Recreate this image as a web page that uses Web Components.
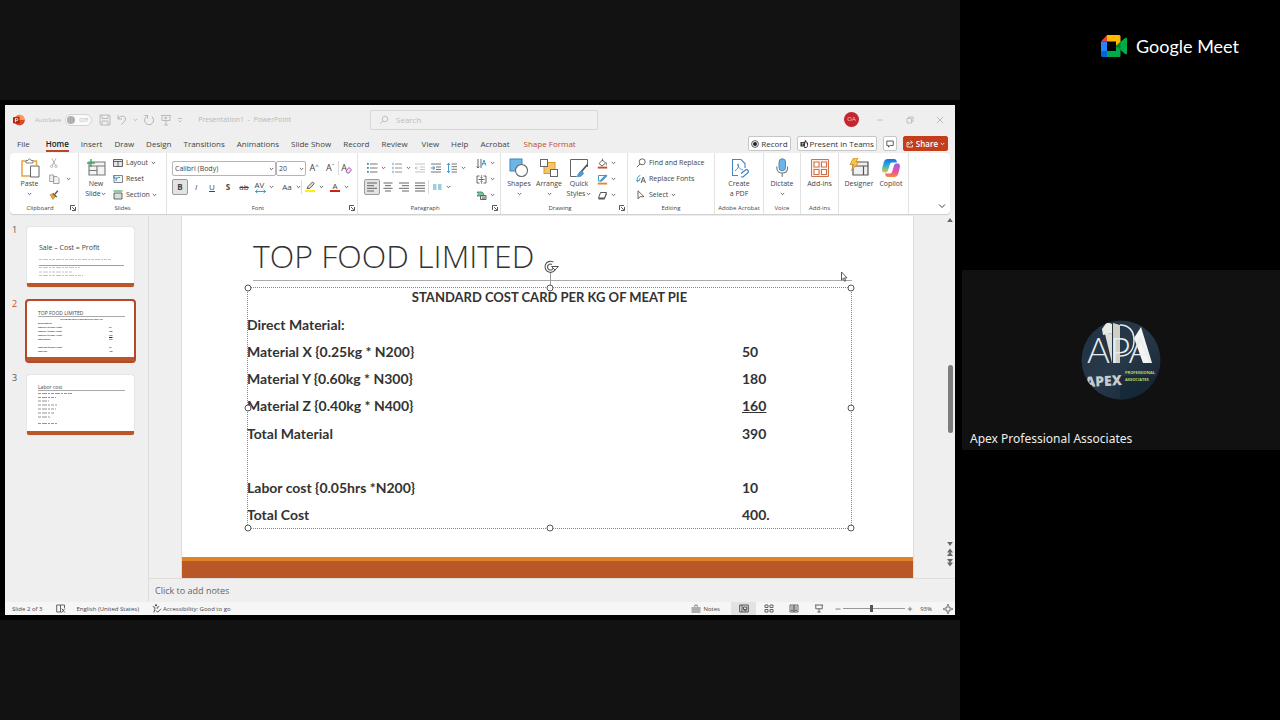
<!DOCTYPE html>
<html lang="en">
<head>
<meta charset="utf-8">
<title>Google Meet – Presentation1</title>
<style>
html,body{margin:0;min-height:100%;background:#111}
body{font-family:"Open Sans","Noto Sans",sans-serif}
</style>
</head>
<body>
<meet-room></meet-room>
<script>
const ICONS={
 chev:[5,4,`<path d="M.8 1l1.7 1.7L4.2 1" fill="none" stroke="#555" stroke-width=".9"/>`],
 chevw:[5,4,`<path d="M.8 1l1.7 1.7L4.2 1" fill="none" stroke="#fff" stroke-width=".9"/>`],
 collapse:[8,6,`<path d="M1 1.5l3 3 3-3" fill="none" stroke="#444"/>`],
 launch:[6,6,`<path d="M.5 5V.5H5M2.2 2.2l2.6 2.6M5.5 2v3.5H2" fill="none" stroke="#444" stroke-width=".9"/>`],
 ppt:[12,12,`<circle cx="6.5" cy="6" r="5.2" fill="#ed6c47"/><path d="M6.5.8a5.2 5.2 0 0 1 5.2 5.2H6.5z" fill="#ff9a4f"/><path d="M1.3 6h10.4a5.2 5.2 0 0 1-10.4 0z" fill="#d9482b"/><rect y="3" width="6.5" height="6.5" rx="1" fill="#b51f08"/><path d="M2.4 8.2V4.4h1.3a1.1 1.1 0 0 1 0 2.3H2.4" fill="none" stroke="#fff" stroke-width=".9"/>`],
 save:[12,12,`<path d="M1 1h9l1 1v9H2l-1-1zM3 1v3.5h6V1M3 11V7h6v4" fill="none" stroke="#b4b4b4" stroke-width=".9"/>`],
 undo:[12,12,`<path d="M2 1v4h4M2.2 4.8C4.5 1 9.5 1.500 9.500 4.800c0 2-1.500 3.200-4 5.700" fill="none" stroke="#b4b4b4"/>`],
 redo:[12,12,`<path d="M3.500 2.500a4.500 4.500 0 1 0 5.500.3M1.500 1.500h3v3" fill="none" stroke="#b4b4b4"/>`],
 show:[12,12,`<path d="M1 1.500h10M2 1.500v5h8v-5M6 6.500V11M4 11h4M5 3v2l2-1z" fill="none" stroke="#b4b4b4" stroke-width=".9"/>`],
 more:[6,6,`<path d="M1 1.500h4M1.500 3.500L3 5l1.500-1.500" fill="none" stroke="#b4b4b4" stroke-width=".8"/>`],
 gchev:[5,4,`<path d="M.8 1l1.700 1.700L4.200 1" fill="none" stroke="#b4b4b4" stroke-width=".9"/>`],
 search:[10,10,`<circle cx="6" cy="4" r="2.800" fill="none" stroke="#bbb" stroke-width=".9"/><path d="M4 6L1.200 8.800" stroke="#bbb" stroke-width=".9"/>`],
 min:[8,8,`<path d="M1 4h6" stroke="#c4c4c4"/>`],
 restore:[8,8,`<path d="M1 2.500h4.500V7H1zM2.500 2.500V1H7v4.500H5.500" fill="none" stroke="#bbb" stroke-width=".9"/>`],
 close:[8,8,`<path d="M1 1l6 6M7 1L1 7" stroke="#b4b4b4" stroke-width=".9"/>`],
 rec:[8,8,`<circle cx="4" cy="4" r="3.400" fill="none" stroke="#333" stroke-width=".8"/><circle cx="4" cy="4" r="2" fill="#222"/>`],
 teams:[8,8,`<rect x=".5" y="2" width="4.500" height="4.500" fill="#333"/><path d="M5.500 2.800h2V5.500a2 2 0 0 1-3.500 1.400" fill="none" stroke="#333"/><circle cx="5.500" cy="1.300" r="1" fill="#333"/><path d="M1.700 3.300h2M2.700 3.300v2.400" stroke="#fff" stroke-width=".6"/>`],
 comment:[8,8,`<path d="M.8 1h6.400v4.500H4.200L2.500 7V5.500H.8z" fill="none" stroke="#333" stroke-width=".8"/>`],
 share:[8,8,`<path d="M3 2.500H1V7h5.500V5M2.500 5c.3-2 1.500-2.700 3-2.700M4.600.8l1.900 1.600-1.900 1.600" fill="none" stroke="#fff" stroke-width=".8"/>`],
 paste:[20,20,`<path d="M6 3H2v15h8M13 3h3.500v4" fill="none" stroke="#e8a33d" stroke-width="1.500"/><path d="M6 5V2.500h2a1.500 1.500 0 0 1 3 0h2V5z" fill="#fff" stroke="#777" stroke-width=".9"/><path d="M10.500 8H19v11h-8.500z" fill="#fff" stroke="#666"/>`],
 cut:[10,10,`<path d="M2.800.5l3.700 6.800M7 .5L3.300 7.300" stroke="#aaa" stroke-width=".9"/><circle cx="2.700" cy="8.300" r="1.200" fill="none" stroke="#aaa" stroke-width=".8"/><circle cx="7.100" cy="8.300" r="1.200" fill="none" stroke="#aaa" stroke-width=".8"/>`],
 copy:[11,10,`<path d="M.7 1h4v6.500h-4zM4.500 2.500h3.500l2 2V9.500H4.500z" fill="#f2f2f2" stroke="#999" stroke-width=".9"/>`],
 painter:[10,10,`<path d="M6 4l2.800-3.200" stroke="#555" stroke-width="1.400"/><path d="M1 4.800l4-1.300 2 2.500-3 3.500z" fill="#e8a33d" stroke="#c07b1a" stroke-width=".6"/><path d="M3.800 3.400l4 3.600" stroke="#555" stroke-width="1.200"/>`],
 newslide:[20,20,`<path d="M3 4h16v13H3zM3 8h16M11 8v9M3 12.500h8" fill="#f4f4f4" stroke="#777" stroke-width="1.100"/><path d="M5 1v8M1 5h8" stroke="#41a567" stroke-width="1.400"/>`],
 layout:[10,10,`<path d="M.5 1.500h9v7h-9zM.5 3.500h9M5 3.500v5" fill="#e6e6e6" stroke="#555" stroke-width=".9"/>`],
 reset:[10,10,`<path d="M1 1.500h8.500v7H1z" fill="#f1f6f9" stroke="#777" stroke-width=".9"/><path d="M3 7c0-3 2-4 4-3.500M.8 1v3h3" fill="none" stroke="#2f8fc4"/>`],
 section:[10,10,`<path d="M.5 1h9" stroke="#41a567" stroke-width="1.200"/><path d="M1 3h8v6H1z" fill="#cfe5d6" stroke="#555" stroke-width=".9"/>`],
 av:[13,13,`<path d="M1.500 10.500h10M3.500 8.800L1.500 10.500l2 1.700M9.500 8.800l2 1.700-2 1.700" fill="none" stroke="#2f8fc4" stroke-width=".9"/>`],
 clear:[8,8,`<path d="M1 5l2.800-3.500L6.500 3.700 4 7H2.200z" fill="#f3def3" stroke="#a349a4" stroke-width=".9"/>`],
 hl:[12,12,`<path d="M3 7.500l1-2L8.500 1l1.800 1.500L6 7.300z" fill="#ddd" stroke="#555" stroke-width=".9"/><path d="M1 10h10" stroke="#fff100" stroke-width="2.200"/>`],
 bul:[12,12,`<path d="M4 2h7.500M4 6h7.500M4 10h7.500" stroke="#666" stroke-width=".9"/><path d="M1 1h1.800v1.800H1zM1 5h1.800v1.800H1zM1 9h1.800v1.800H1z" fill="#2f8fc4"/>`],
 num:[12,12,`<path d="M4 2h7M4 6h7M4 10h7" stroke="#888" stroke-width=".9"/><path d="M2 .8v2.400M2 4.800v2.400M2 8.800v2.400" stroke="#2f8fc4" stroke-width=".9"/>`],
 dec:[12,12,`<path d="M1 2h10M6 5h5M6 7.500h5M1 10h10M4.500 6H1M2.500 4.500L1 6l1.500 1.500" fill="none" stroke="#bbb" stroke-width=".9"/>`],
 inc:[12,12,`<path d="M1 2h10M6 5h5M6 7.500h5M1 10h10" stroke="#666" stroke-width=".9"/><path d="M.8 6h4M3 4.200L4.800 6 3 7.800" fill="none" stroke="#2f8fc4"/>`],
 spc:[12,12,`<path d="M5.500 2H11M5.500 4.700H11M5.500 7.300H11M5.500 10H11" stroke="#666" stroke-width=".9"/><path d="M2.500 1.500v9M1 3l1.500-1.700L4 3M1 9l1.500 1.700L4 9" fill="none" stroke="#2f8fc4" stroke-width=".9"/>`],
 al:[12,12,`<path d="M1 2h10M1 4.700h7M1 7.300h10M1 10h7" stroke="#555" stroke-width=".9"/>`],
 ac:[12,12,`<path d="M1.500 2h9M3 4.700h6M1.500 7.300h9M3 10h6" stroke="#555" stroke-width=".9"/>`],
 ar:[12,12,`<path d="M1 2h10M4 4.700h7M1 7.300h10M4 10h7" stroke="#555" stroke-width=".9"/>`],
 aj:[12,12,`<path d="M1 2h10M1 4.700h10M1 7.300h10M1 10h10" stroke="#555" stroke-width=".9"/>`],
 cols:[10,10,`<path d="M1 3h3.500M1 5h3.500M1 7h3.500M6 3h3.500M6 5h3.500M6 7h3.500" stroke="#3aa0b8" stroke-width="1.200"/>`],
 tdir:[11,11,`<path d="M2 1v9M.7 8.500L2 10l1.300-1.500M5 1v9" fill="none" stroke="#555" stroke-width=".9"/><path d="M6 7.500L8 2l2 5.500M6.700 5.700h2.600" fill="none" stroke="#2f8fc4" stroke-width=".9"/>`],
 tal:[11,11,`<path d="M3.500 2H1v7h2.500M7.500 2H10v7H7.500M2.500 5.500h6" fill="none" stroke="#555" stroke-width=".9"/><path d="M5.500 1v3.500M5.500 6.500V10M4.300 3.300l1.200 1.200 1.200-1.200M4.300 7.700l1.200-1.200 1.200 1.200" fill="none" stroke="#2f8fc4" stroke-width=".8"/>`],
 smart:[11,11,`<path d="M1 2h5l2 2-2 2H1l1.500-2z" fill="#7cc29a" stroke="#2e8555" stroke-width=".8"/><path d="M4.500 5.500h5.500v4H4.500z" fill="#ddd" stroke="#555" stroke-width=".9"/><path d="M6 7h3M6 8.300h3" stroke="#555" stroke-width=".6"/>`],
 shapes:[20,20,`<rect x="1" y="1" width="12" height="12" fill="#6fb4e6" stroke="#3b86c0"/><circle cx="12.500" cy="12.500" r="6" fill="#fff" stroke="#666" stroke-width="1.100"/>`],
 arrange:[20,20,`<rect x="5" y="4.500" width="11" height="11" fill="#f3c66d" stroke="#d99a2b"/><rect x="1.500" y="1.500" width="7" height="7" fill="#fff" stroke="#666"/><rect x="11.500" y="11.500" width="7" height="7" fill="#fff" stroke="#666"/>`],
 quick:[20,20,`<path d="M18.500 9V1.500h-17v17h6" fill="none" stroke="#666"/><path d="M18.500 6.500L12 14" stroke="#555" stroke-width="1.800"/><path d="M12.500 13l2 2c-1 3.500-4 4-7 3.500 2-.8 1.500-4.500 5-5.500z" fill="#4a9bd9" stroke="#2b78b5" stroke-width=".6"/>`],
 fill:[11,11,`<path d="M2 5.500L5.500 2l3 3-3.500 3z" fill="#fff" stroke="#555" stroke-width=".9"/><path d="M5.500 3V.6M9.300 4.500v3" stroke="#555" stroke-width=".8"/><path d="M.8 9.600h9.400" stroke="#c4502a" stroke-width="1.900"/>`],
 outl:[11,11,`<path d="M1.500 1.500h7M1.500 1.500v5.500h3" fill="none" stroke="#2f8fc4" stroke-width=".9"/><path d="M3.500 7.200l1-2.200L9 .8l1 1L5.700 6.500z" fill="#4a9bd9" stroke="#2b78b5" stroke-width=".6"/><path d="M.8 9.600h9.400" stroke="#e08a2a" stroke-width="1.900"/>`],
 fx:[11,11,`<path d="M3.500 2.500h6L7.500 8h-6z" fill="#fff" stroke="#444" stroke-width=".9"/><path d="M1.500 8v1.500h6L10 4V2.500L7.500 8z" fill="#555"/>`],
 find:[10,10,`<circle cx="6.200" cy="3.800" r="3" fill="none" stroke="#555" stroke-width=".9"/><path d="M4 6L.8 9.200" stroke="#555" stroke-width=".9"/>`],
 rfont:[10,10,`<path d="M5 9l2.200-6L9.500 9M5.800 7h2.800" fill="none" stroke="#555" stroke-width=".9"/><path d="M4.300 1.500C1.500 2 .8 4.500 1.500 7.500M.3 6l1.300 1.700L3 6.300M3 7l1.300-3" fill="none" stroke="#2f8fc4" stroke-width=".9"/>`],
 select:[10,10,`<path d="M2 .8v8L4.200 6.700H8z" fill="none" stroke="#555" stroke-width=".9"/>`],
 pdf:[20,20,`<path d="M9 17.500H3.500v-16h8.500l4 4V10" fill="none" stroke="#4a86b8" stroke-width="1.100"/><path d="M6 13c3-2 4-5 3.500-6.500-1-1.500-1.500.5.500 3s3.500 2.500 4 2" fill="none" stroke="#4a86b8" stroke-width=".9"/><path d="M12 15.500l4.500-3.500a1.800 1.800 0 0 1 2 3L15 18a1.800 1.800 0 0 1-3 .5" fill="none" stroke="#2f7fd0" stroke-width="1.100"/>`],
 mic:[20,20,`<rect x="7" y=".8" width="6.500" height="12" rx="3.200" fill="#6fb4e6" stroke="#3b86c0" stroke-width=".9"/><path d="M4.800 8.500v1.500c0 3.500 2.500 5 5.400 5s5.400-1.500 5.400-5V8.500M10.200 15v3.700" fill="none" stroke="#777" stroke-width="1.100"/>`],
 addins:[20,20,`<path d="M1.500 1.500h17v17h-17z" fill="#fdeee6" stroke="#d0714a"/><path d="M4 4h5v5H4zM11.500 4h5v5h-5zM4 11.500h5v5H4zM11.500 11.500h5v5h-5z" fill="#fff" stroke="#d0714a" stroke-width="1.100"/>`],
 designer:[20,20,`<path d="M4 4h15v13H4zM4 8h15M14.500 8v9" fill="#f0f0f0" stroke="#555" stroke-width="1.200"/><path d="M4.500 0H9L7 4h3L2.500 12.500l2-6H1z" fill="#f6c452" stroke="#d28a1c" stroke-width=".8"/>`],
 copilot:[20,20,`<defs><linearGradient id="a" x2="0" y2="1"><stop stop-color="#1b6fe0"/><stop offset=".5" stop-color="#27b5d8"/><stop offset="1" stop-color="#f2c230"/></linearGradient><linearGradient id="b" x2="0" y2="1"><stop stop-color="#a35bf0"/><stop offset=".6" stop-color="#e8559a"/><stop offset="1" stop-color="#f58a3c"/></linearGradient></defs><path d="M7 1h6c2 0 2.500 1.500 3 3.500H11c-1.500 0-2 1-2.500 3L7 12.500C6.500 14 5.500 14.500 4 14.500c-3 0-3.500-2-2.500-5.500l1.200-4.500C3.500 2 4.500 1 7 1z" fill="url(#a)"/><path d="M13 19H7c-2 0-2.500-1.500-3-3.500h5c1.500 0 2-1 2.500-3L13 7.500C13.500 6 14.500 5.500 16 5.500c3 0 3.500 2 2.500 5.500l-1.200 4.500C16.500 18 15.500 19 13 19z" fill="url(#b)"/>`],
 book:[10,9,`<path d="M.7 1h3.800v7H.7zM4.500 1h4v3M5.500 8H4.500" fill="none" stroke="#555" stroke-width=".9"/><path d="M5.800 4.500l3 4M8.800 4.500l-3 4" stroke="#555" stroke-width=".9"/>`],
 acc:[10,9,`<circle cx="4" cy="1.300" r="1" fill="#444"/><path d="M.8 2.500l2 .8v2L1.800 8.500M7.200 2.500l-2 .8v1.500" fill="none" stroke="#444" stroke-width=".9"/><path d="M4 6.500l1.700 1.700L9 4.800" fill="none" stroke="#444" stroke-width=".9"/>`],
 notes:[10,9,`<path d="M.5 4h9M.5 6h9M.5 8h9M3 2.500L5 .8l2 1.700" fill="none" stroke="#555" stroke-width=".9"/>`],
 vnorm:[10,9,`<path d="M.7 1h8.600v7H.7zM3 1v7M4.500 3h3.300v2.500H4.500zM4.500 6.800h3.300" fill="none" stroke="#444" stroke-width=".9"/>`],
 vsort:[10,9,`<path d="M1 1h3v2.500H1zM6 1h3v2.500H6zM1 5.500h3V8H1zM6 5.500h3V8H6z" fill="none" stroke="#555" stroke-width=".9"/>`],
 vread:[10,9,`<path d="M1 1h4v7H1zM5 1h4v7H5zM2 3h2M2 5h2M6 3h2M6 5h2M2 6.500h2M6 6.500h2" fill="none" stroke="#555" stroke-width=".9"/>`],
 vshow:[10,9,`<path d="M1 1h8M1.800 1v3.800h6.400V1M5 4.800V8M3.300 8h3.400" fill="none" stroke="#555" stroke-width=".9"/>`],
 minus:[6,6,`<path d="M.5 3h5" stroke="#777" stroke-width=".9"/>`],
 plus:[6,6,`<path d="M.8 3h4.400M3 .8v4.400" stroke="#777" stroke-width=".9"/>`],
 fit:[10,10,`<path d="M3 3h4v4H3zM5 .5v1.800M5 7.700v1.800M.5 5h1.800M7.700 5h1.800M3.800 1.500L5 .4l1.200 1.100M3.800 8.500L5 9.600l1.200-1.100M1.500 3.800L.4 5l1.100 1.200M8.500 3.800L9.600 5 8.500 6.200" fill="none" stroke="#555" stroke-width=".8"/>`],
 up:[8,6,`<path d="M1.200 5h5.600L4 1z" fill="#666"/>`],
 down:[8,6,`<path d="M1.200 1h5.600L4 5z" fill="#666"/>`],
 dup:[8,9,`<path d="M1 4.500h6L4 .5zM1 8h6L4 4z" fill="#666"/>`],
 ddown:[8,9,`<path d="M1 4.500h6L4 8.500zM1 1h6L4 5z" fill="#666"/>`],
 rotate:[16,16,`<path d="M13 8A5.500 5.500 0 1 1 10.300 3.100M10.500 8a3 3 0 1 1-1.500-2.600" fill="none" stroke="#555" stroke-width="1.100"/><path d="M8.500 7.500h7L12 11z" fill="#fff" stroke="#555" stroke-width="1"/>`],
 cursor:[8,12,`<path d="M1.500 1v8l1.800-1.700 1.300 3 1.200-.5-1.300-2.900H7z" fill="#fff" stroke="#333" stroke-width=".8"/>`],
 meet:[27,22,`<path d="M6 0v6.500H0z" fill="#ea4335"/><path d="M0 6.500h6V16H0z" fill="#2684fc"/><path d="M0 16h6v6H1.500A1.500 1.500 0 0 1 0 20.500z" fill="#0066da"/><path d="M6 0h12a1.500 1.500 0 0 1 1.500 1.500V7L15 11V6.500H6z" fill="#ffba00"/><path d="M6 16h9v-5l4.500 3.500v6A1.500 1.500 0 0 1 18 22H6z" fill="#00ac47"/><path d="M15 11l9-8c.7-.6 2 0 2 1v14c0 1-1.300 1.600-2 1z" fill="#00ac47"/><path d="M15 11l4.500-4v7.500z" fill="#00832d"/>`]
};
const icon=n=>{const [w,h,c]=ICONS[n];return `<svg width="${w}" height="${h}" viewBox="0 0 ${w} ${h}" aria-hidden="true" style="display:block;flex:none">${c}</svg>`};
function element(name,render){
  customElements.define(name,class extends HTMLElement{
    constructor(){super();this.attachShadow({mode:'open'})}
    connectedCallback(){
      const t=document.createElement('template');
      t.innerHTML='<style>*{box-sizing:border-box}button{font:inherit;color:inherit;background:none;border:0;padding:0;margin:0}</style>'+render(this);
      this.shadowRoot.replaceChildren(t.content.cloneNode(true));
    }
  });
}
element('ui-icon',e=>`<style>:host{display:inline-flex;flex:none}</style>${icon(e.getAttribute('name'))}`);

/* Ribbon button: kind is "big" (icon over text), "row" (icon beside text) or "tool" (icon only) */
element('tool-button',e=>{
  const a=n=>e.getAttribute(n)||'',kind=a('kind')||'tool';
  const lines=a('label')?a('label').split('|'):[];
  const chev=e.hasAttribute('chev')?`<i>${icon('chev')}</i>`:'';
  const text=lines.map((l,i)=>`<span>${l}${i===1||kind==='row'?chev:''}</span>`).join('')+((kind==='big'&&lines.length<2)||kind==='tool'?chev:'');
  return `<style>
  :host{display:flex;flex:none}
  button{display:flex;align-items:center;font-size:7px;line-height:10px;color:#444;white-space:nowrap;cursor:pointer}
  i{display:inline-flex;align-items:center;justify-content:center;width:6px;height:10px;vertical-align:top}
  .big{flex-direction:column;padding-top:3px;width:100%}
  .big svg:first-child{margin-bottom:1px}
  .row{gap:3px;height:16px}.row i{margin-left:2px}
  .tool>b{display:flex;align-items:center;justify-content:center;width:16px;height:16px;font-weight:400}
  .on>b{background:#e3e3e3;border:1px solid #9a9a9a;border-radius:2px}
  </style><button class="${kind} ${e.hasAttribute('on')?'on':''}" ${lines.length?'':`aria-label="${a('name')}"`}>${
   kind==='tool'?`<b>${a('icon')?icon(a('icon')):''}<slot></slot></b>`:icon(a('icon'))}${text}</button>`});

element('ribbon-group',e=>`<style>
 :host{display:flex;flex-direction:column;min-width:0;border-right:1px solid #e2e2e2}
 .body{display:flex;height:49px;padding-top:2px}
 .foot{display:flex;align-items:center;height:12px;font-size:6px;line-height:12px;color:#444;white-space:nowrap}
 .foot span{display:flex;justify-content:center;flex:1}
 .foot svg{margin-right:2px}
 </style><div class="body"><slot></slot></div><div class="foot"><span>${e.getAttribute('label')||''}</span>${e.hasAttribute('launch')?icon('launch'):''}</div>`);

element('title-bar',()=>`<style>
 :host{display:grid;grid-template-columns:365px 228px 1fr;align-items:center;height:29px;color:#b8b8b8;font-size:7px}
 .l{display:flex;align-items:center;padding-left:8px}
 .l label{display:flex;align-items:center;gap:4px;margin-left:10px;font-size:6px}
 .tg{display:flex;align-items:center;position:relative}
 input[type=checkbox]{appearance:none;margin:0;width:27px;height:12px;border-radius:6px;border:1px solid #d4d4d4;background:#fafafa}
 .tg i{position:absolute;left:2px;top:2px;width:8px;height:8px;border-radius:50%;background:#b0b0b0}
 .tg span{position:absolute;left:14px;top:1px;font-size:6px;line-height:10px}
 .q{display:flex;gap:5px;align-items:center;margin-left:7px}
 .doc{margin-left:15px;white-space:pre}
 .s{display:flex;align-items:center;height:20px;border:1px solid #d6d6d6;border-radius:2px;background:#f0f0f0;padding:0 8px;gap:7px}
 .s input{flex:1;min-width:0;border:0;background:none;padding:0;font:8px "Open Sans",sans-serif;outline:0}
 .s input::placeholder{color:#bcbcbc;opacity:1}
 .r{display:flex;justify-content:flex-end;align-items:center;padding-right:11px;gap:22px}
 .av{width:15px;height:15px;border-radius:50%;background:#c4262e;color:#f6c9c9;font-size:6px;line-height:15px;text-align:center;margin-right:-5px}
 </style><div class="l">${icon('ppt')}<label>AutoSave<span class="tg"><input type="checkbox" aria-label="AutoSave"><i></i><span>Off</span></span></label>
 <div class="q"><button aria-label="Save">${icon('save')}</button><button aria-label="Undo">${icon('undo')}</button>${icon('gchev')}<button aria-label="Redo">${icon('redo')}</button><button aria-label="Start">${icon('show')}</button><button aria-label="More">${icon('more')}</button></div><span class="doc">Presentation1  -  PowerPoint</span></div>
 <label class="s">${icon('search')}<input placeholder="Search" aria-label="Search"></label>
 <div class="r"><span class="av">OA</span><button aria-label="Minimize">${icon('min')}</button><button aria-label="Restore">${icon('restore')}</button><button aria-label="Close">${icon('close')}</button></div>`);

element('menu-tabs',()=>`<style>
 :host{display:flex;align-items:center;justify-content:space-between;height:19px;padding:0 7px 0 12px;font-size:8px;color:#444}
 nav{display:flex;gap:12px;line-height:13px}
 a{color:inherit;text-decoration:none;white-space:nowrap}
 a:first-child{margin-right:4px}
 .gap{margin-left:2px}
 .on{font-weight:600;color:#222;border-bottom:1px solid #b7472a;box-shadow:0 1px #b7472a}
 .ctx{color:#c0492b}
 div{display:flex;gap:6px}
 button{display:flex;align-items:center;gap:2px;height:15px;padding:0 2px;border:1px solid #c6c6c6;border-radius:2px;background:#fff;color:#333;white-space:nowrap}
 .sh{background:#c43e1c;border-color:#c43e1c;color:#fff;font-weight:600}
 </style><nav><a href="#">File</a><a href="#" class="on">Home</a>${['Insert','Draw','Design','Transitions','Animations','Slide Show','Record','Review','View','Help','Acrobat'].map(t=>`<a href="#"${t==='View'?' class="gap"':''}>${t}</a>`).join('')}<a href="#" class="ctx gap">Shape Format</a></nav>
 <div><button>${icon('rec')}Record</button><button>${icon('teams')}Present in Teams</button><button aria-label="Comments">${icon('comment')}</button><button class="sh">${icon('share')}Share${icon('chevw')}</button></div>`);

element('ppt-ribbon',()=>`<style>
 :host{display:grid;grid-template-columns:69px 88px 191px 143px 127px 87px 49px 37px 38px 70px 1fr;height:61px;margin:0 5px;background:#fff;border-radius:4px;box-shadow:0 1px 1px #cfcfcf}
 .col{display:flex;flex-direction:column}
 .rows{display:flex;flex-direction:column;gap:3px;padding-top:5px}
 .rows>div{display:flex;gap:0;height:16px;align-items:center}
 hr{width:1px;height:14px;border:0;background:#dcdcdc;margin:0 2px}
 .combo{position:relative;display:flex}
 select{appearance:none;height:15px;border:1px solid #b5b5b5;border-radius:2px;background:#fff;font:7px "Open Sans",sans-serif;color:#444;padding:0 2px;margin:0}
 .combo ui-icon{position:absolute;right:2px;top:6px}
 .end{display:flex;justify-content:flex-end;align-items:flex-end;padding:0 4px 5px}
 .t{font-size:9px;line-height:12px}
 tool-button u,tool-button s,tool-button em,tool-button strong{font-size:8px;line-height:12px}
 sup{font-size:6px;line-height:6px;margin-bottom:4px}
 .aa{border-bottom:2px solid #d0201a;line-height:8px;padding:0 2px}
 .stack{position:relative;display:flex}.stack span{position:absolute;left:1px;top:0;font-size:8px;line-height:8px}
 </style>
 <ribbon-group label="Clipboard" launch>
  <tool-button kind="big" icon="paste" label="Paste" chev style="width:39px"></tool-button>
  <div class="col" style="padding-right:2px"><tool-button kind="row" icon="cut" name="Cut"></tool-button>
   <tool-button kind="row" icon="copy" label=" " name="Copy" chev></tool-button><tool-button kind="row" icon="painter" name="Format painter"></tool-button></div>
 </ribbon-group>
 <ribbon-group label="Slides"><tool-button kind="big" icon="newslide" label="New|Slide" chev style="width:34px"></tool-button>
  <div class="col"><tool-button kind="row" icon="layout" label="Layout" chev></tool-button><tool-button kind="row" icon="reset" label="Reset"></tool-button><tool-button kind="row" icon="section" label="Section" chev></tool-button></div>
 </ribbon-group>
 <ribbon-group label="Font" launch><div class="rows" style="padding-left:5px">
  <div><span class="combo"><select aria-label="Font" style="width:104px"><option>Calibri (Body)</option></select><ui-icon name="chev"></ui-icon></span><span class="combo"><select aria-label="Font size" style="width:30px"><option>20</option></select><ui-icon name="chev"></ui-icon></span>
   <tool-button name="Grow font"><span class="t">A</span><sup>^</sup></tool-button><tool-button name="Shrink font"><span class="t">A</span><sup>ˇ</sup></tool-button><hr style="margin:0"><tool-button name="Clear formatting"><span class="t">A</span><ui-icon name="clear" style="margin:4px 0 0 -2px"></ui-icon></tool-button></div>
  <div><tool-button name="Bold" on><strong>B</strong></tool-button><tool-button name="Italic"><em>I</em></tool-button><tool-button name="Underline"><u>U</u></tool-button><tool-button name="Shadow"><strong>S</strong></tool-button><tool-button name="Strikethrough"><s>ab</s></tool-button>
   <tool-button name="Spacing" chev><span class="stack"><ui-icon name="av"></ui-icon><span>AV</span></span></tool-button><hr style="background:none"><tool-button name="Case" chev><span style="font-size:8px">Aa</span></tool-button><hr style="margin:0"><tool-button icon="hl" name="Highlight" chev></tool-button><hr style="background:none;margin:0 1px"><tool-button name="Font colour" chev><span class="aa" style="font-size:8px">A</span></tool-button></div>
 </div></ribbon-group>
 <ribbon-group label="Paragraph" launch><div class="rows" style="padding-left:6px;width:115px">
  <div><tool-button icon="bul" name="Bullets" chev></tool-button><hr style="background:none;margin:0 1px"><tool-button icon="num" name="Numbering" chev></tool-button><hr style="background:none;margin:0"><tool-button icon="dec" name="Outdent"></tool-button><tool-button icon="inc" name="Indent"></tool-button><tool-button icon="spc" name="Line spacing" chev></tool-button></div>
  <div><tool-button icon="al" name="Left" on></tool-button><tool-button icon="ac" name="Center"></tool-button><tool-button icon="ar" name="Right"></tool-button><tool-button icon="aj" name="Justify"></tool-button><hr style="margin:0"><tool-button icon="cols" name="Columns" chev></tool-button></div></div>
  <div class="col"><tool-button icon="tdir" name="Text direction" chev></tool-button><tool-button icon="tal" name="Align text" chev></tool-button><tool-button icon="smart" name="SmartArt" chev></tool-button></div>
 </ribbon-group>
 <ribbon-group label="Drawing" launch><tool-button kind="big" icon="shapes" label="Shapes" chev style="width:30px;margin-left:3px"></tool-button><tool-button kind="big" icon="arrange" label="Arrange" chev style="width:30px"></tool-button><tool-button kind="big" icon="quick" label="Quick|Styles" chev style="width:30px"></tool-button>
  <div class="col"><tool-button icon="fill" name="Fill" chev></tool-button><tool-button icon="outl" name="Outline" chev></tool-button><tool-button icon="fx" name="Effects" chev></tool-button></div></ribbon-group>
 <ribbon-group label="Editing"><div class="col" style="padding-left:8px"><tool-button kind="row" icon="find" label="Find and Replace"></tool-button><tool-button kind="row" icon="rfont" label="Replace Fonts"></tool-button><tool-button kind="row" icon="select" label="Select" chev></tool-button></div></ribbon-group>
 <ribbon-group label="Adobe Acrobat"><tool-button kind="big" icon="pdf" label="Create|a PDF" style="width:48px"></tool-button></ribbon-group>
 <ribbon-group label="Voice"><tool-button kind="big" icon="mic" label="Dictate" chev style="width:36px"></tool-button></ribbon-group>
 <ribbon-group label="Add-ins"><tool-button kind="big" icon="addins" label="Add-ins" style="width:37px"></tool-button></ribbon-group>
 <ribbon-group><tool-button kind="big" icon="designer" label="Designer" style="width:40px"></tool-button><tool-button kind="big" icon="copilot" label="Copilot" style="width:24px"></tool-button></ribbon-group>
 <div class="end"><button aria-label="Collapse ribbon">${icon('collapse')}</button></div>`);

const COSTS=[['Direct Material:',''],['Material X {0.25kg * N200}','50'],['Material Y {0.60kg * N300}','180'],['Material Z {0.40kg * N400}','<u>160</u>'],['Total Material','390'],['&nbsp;',''],['Labor cost {0.05hrs *N200}','10'],['Total Cost','400.']];
const costRows=COSTS.map(([a,b])=>`<tr><th scope="row">${a}</th><td>${b}</td></tr>`).join('');

element('slide-thumb',e=>`<style>
 :host{display:grid;grid-template-columns:15px 107px;gap:0;height:60px;font-size:9px;color:#555}
 .n{line-height:10px;margin-top:-2px}
 .p{display:flex;flex-direction:column;background:#fff;border-radius:2px;box-shadow:0 0 1px #999;overflow:hidden;color:#444;border-bottom:4px solid #b95729}
 :host([on]) .p{outline:2px solid #b7472a;outline-offset:0}
 :host([on]) .n{color:#c4502a}
 </style><span class="n">${e.getAttribute('n')}</span><div class="p"><slot></slot></div>`);

element('slide-list',()=>`<style>
 :host{display:flex;flex-direction:column;gap:14px;padding:11px 0 0 7px;border-right:1px solid #dcdcdc}
 h3{margin:0;font-weight:400;font-size:7px;line-height:9px}
 .a{padding:16px 10px 0 12px}.b{padding:9px 9px 0 11px}
 .b h3{font-size:5px;line-height:6px;border-bottom:1px solid #aaa}
 table{width:100%;border-collapse:collapse;font:bold 2px/4px Lato,sans-serif;color:#222}
 caption{line-height:4px}th,td{padding:0;text-align:left;line-height:4px;height:4px}td{width:16px}
 svg{display:block}
 </style>
 <slide-thumb n="1"><div class="a"><h3>Sale – Cost = Profit</h3><svg width="86" height="24" fill="none" stroke="#b5b5b5" stroke-width=".8" stroke-dasharray="3 1 5 1 2 1"><path d="M0 7.500h72"/><path d="M-2 13.500h87" stroke="#888" stroke-dasharray="none"/><path d="M0 15.500h41M0 20h33M0 23.500h44"/></svg></div></slide-thumb>
 <slide-thumb n="2" on><div class="b"><h3>TOP FOOD LIMITED</h3><table><caption>STANDARD COST CARD PER KG OF MEAT PIE</caption>${costRows}</table></div></slide-thumb>
 <slide-thumb n="3"><div class="b"><h3>Labor cost</h3><svg width="86" height="36" fill="none" stroke="#8a8a8a" stroke-width=".9" stroke-dasharray="3 1 5 1 2 1"><path d="M0 2.500h34M0 6.500h18M0 10h11M0 14h19M0 18h18M0 22h17M0 26h13M0 32.500h19"/></svg></div></slide-thumb>`);

element('slide-canvas',()=>`<style>
 :host{display:block;background:#fff;color:#333;border-right:1px solid #ddd;border-left:1px solid #ddd}
 .in{padding:16px 61px 28px 65px}
 h1{margin:0 0 3px 6px;font:300 32px/48px "Open Sans",sans-serif;color:#333;border-bottom:1px solid #aaa;white-space:nowrap}
 .box{position:relative}
 table{width:100%;height:218px;border-collapse:collapse;font:700 14px/20px Lato,sans-serif;color:#333}
 caption{height:27px;line-height:27px;font-size:13px}
 th,td{padding:0;text-align:left;vertical-align:middle}
 td{width:110px}
 .sel{position:absolute;inset:3px 0 0 0;border:1px dotted #888}
 .sel i{position:absolute;width:7px;height:7px;border:1px solid #555;border-radius:50%;background:#fff;transform:translate(-50%,-50%)}
 .stem{position:absolute;left:50%;top:-15px;height:12px;border-left:1px solid #999}
 .rot{position:absolute;left:50%;top:-29px;margin-left:-7px}
 .cur{position:absolute;right:3px;top:-17px}
 footer{height:21px;background:#b95729;border-top:4px solid #dd8627}
 </style><div class="in"><h1>TOP FOOD LIMITED</h1><div class="box"><table><caption>STANDARD COST CARD PER KG OF MEAT PIE</caption><tbody>${costRows}</tbody></table>
 <div class="sel"><span class="stem"></span>${[[0,0],[50,0],[100,0],[0,50],[100,50],[0,100],[50,100],[100,100]].map(([x,y])=>`<i style="left:${x}%;top:${y}%"></i>`).join('')}<span class="rot">${icon('rotate')}</span><span class="cur">${icon('cursor')}</span></div></div></div><footer></footer>`);

element('work-area',()=>`<style>
 :host{display:grid;grid-template-columns:144px 1fr;margin-top:2px}
 .m{display:flex;flex-direction:column;min-width:0}
 .c{display:grid;grid-template-columns:32px 1fr 31px 10px;border-bottom:1px solid #e0dcd8}
 .sb{grid-column:4;display:flex;flex-direction:column;align-items:center;gap:1px;padding:1px 0 11px}
 .sb i{width:5px;height:68px;border-radius:3px;background:#7d7d7d;margin:141px 0 auto}
 slide-canvas{grid-column:2}
 .n{display:flex;height:23px;padding:0 6px}
 input{flex:1;border:0;background:none;padding:0;font:9px "Open Sans",sans-serif;outline:0}
 input::placeholder{color:#666;opacity:1}
 </style><slide-list></slide-list><div class="m"><div class="c"><slide-canvas></slide-canvas><div class="sb">${icon('up')}<i></i>${icon('down')}${icon('dup')}${icon('ddown')}</div></div>
 <div class="n"><input placeholder="Click to add notes" aria-label="Notes"></div></div>`);

element('status-bar',()=>`<style>
 :host{display:flex;align-items:center;justify-content:space-between;height:13px;background:#f6f6f6;padding:0 2px 0 7px;font-size:6px;color:#444;white-space:nowrap}
 div{display:flex;align-items:center}
 .l span{margin-right:13px}.l svg{margin-right:11px}.l .k{display:flex;margin-right:1px}.l .k svg{margin:0}
 button{display:flex;align-items:center;justify-content:center;width:25px;height:13px}
 .n{width:29px;gap:2px;margin-right:11px}.on{background:#e2e2e2}
 input{appearance:none;width:62px;height:9px;margin:0 2px;background:linear-gradient(#999,#999) center/100% 1px no-repeat}
 input::-webkit-slider-thumb{appearance:none;width:3px;height:7px;background:#555}
 .z{width:6px}.out{margin-left:4px}.pc{margin:0 11px 0 7px}.f{width:10px}
 </style><div class="l"><span>Slide 2 of 3</span>${icon('book')}<span>English (United States)</span><i class="k">${icon('acc')}</i><span>Accessibility: Good to go</span></div>
 <div><button class="n">${icon('notes')}Notes</button><button class="on" aria-label="Normal">${icon('vnorm')}</button><button aria-label="Sorter">${icon('vsort')}</button><button aria-label="Reading">${icon('vread')}</button><button aria-label="Slide show">${icon('vshow')}</button><button class="z out" aria-label="Zoom out">${icon('minus')}</button><input type="range" min="0" max="100" value="46" aria-label="Zoom"><button class="z" aria-label="Zoom in">${icon('plus')}</button><span class="pc">93%</span><button class="f" aria-label="Fit">${icon('fit')}</button></div>`);

element('ppt-window',()=>`<style>:host{display:block;background:#efefef;overflow:hidden}</style><title-bar></title-bar><menu-tabs></menu-tabs><ppt-ribbon></ppt-ribbon><work-area></work-area><status-bar></status-bar>`);

element('participant-tile',e=>`<style>
 :host{position:relative;display:flex;align-items:center;justify-content:center;height:180px;margin-left:2px;background:#111;color:#eee}
 span{position:absolute;left:8px;bottom:2px;font:12px/18px "Noto Sans",sans-serif}
 </style><svg width="80" height="80" viewBox="0 0 80 80" role="img" aria-label="Avatar"><defs><clipPath id="c"><circle cx="40" cy="40" r="39.500"/></clipPath><linearGradient id="g" x2="1" y2="1"><stop stop-color="#1f3040"/><stop offset=".5" stop-color="#27394a"/><stop offset="1" stop-color="#152330"/></linearGradient></defs>
 <g clip-path="url(#c)"><rect width="80" height="80" fill="url(#g)"/><path d="M39 56h41v24H39z" fill="#122636" opacity=".6"/>
 <path d="M21 9l5-7 5 2v9l-9 2z" fill="#e9e9e6"/><path d="M24 14l7-1v30z" fill="#dcdcd8"/><path d="M32 3l7 2v38h-7z" fill="#cfcfc6"/><path d="M53 18l7-11 11 36h-9z" fill="#f4f4f4"/><path d="M39 5c9 0 14 6 14 15 0 10-5 16-14 16" fill="none" stroke="#e8ecee" stroke-width="1.500"/>
 <text x="6" y="43" font-family="Lato,sans-serif" font-weight="300" font-size="35" fill="#e8ecee">APA</text>
 <g transform="rotate(-3 22 60)"><text x="4" y="66" font-family="Open Sans,sans-serif" font-weight="800" font-size="14" fill="#c9cccd">APEX</text></g>
 <g font-family="Open Sans,sans-serif" font-weight="700" font-size="4" fill="#c9cf5a"><text x="44" y="54">PROFESSIONAL</text><text x="44" y="61">ASSOCIATES</text></g></g></svg><span>${e.getAttribute('name')}</span>`);

element('meet-room',()=>`<style>
 :host{display:grid;grid-template-columns:3fr 1fr;min-height:100vh}
 main{display:flex;flex-direction:column;justify-content:center;background:#121212;min-width:0}
 .share{background:#000;padding:5px}
 aside{display:grid;grid-template-rows:1fr auto 1fr;background:#000}
 header{display:flex;justify-content:flex-end;align-items:center;gap:8px;height:22px;margin:35px 41px 0 0;color:#fff;font:400 18px/24px Lato,sans-serif}
 </style><main><div class="share"><ppt-window></ppt-window></div></main>
 <aside><header>${icon('meet')}<span>Google Meet</span></header><participant-tile name="Apex Professional Associates"></participant-tile></aside>`);
</script>
</body>
</html>
